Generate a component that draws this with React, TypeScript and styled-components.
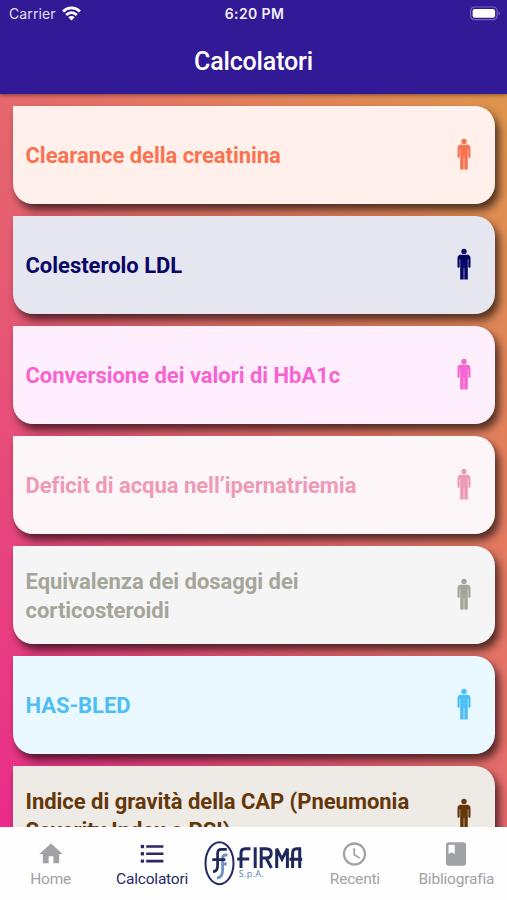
import React from "react";
import styled, { createGlobalStyle } from "styled-components";

const GlobalStyle = createGlobalStyle`
  * { box-sizing: border-box; }
  body { margin: 0; background: #fff; font-family: Roboto, sans-serif; }
`;

const Screen = styled.div`
  display: flex;
  flex-direction: column;
  height: 900px;
  overflow: hidden;
`;

const Header = styled.header`
  flex: none;
  height: 94px;
  background: #321995;
  color: #fff;
  position: relative;
  z-index: 1;
  box-shadow: 0 1px 4px rgba(0, 0, 0, 0.45);
`;

const StatusBar = styled.div`
  display: grid;
  grid-template-columns: 1fr auto 1fr;
  align-items: center;
  height: 27px;
  padding: 0 7px 0 9px;
  font-family: Inter, sans-serif;
  font-size: 14px;
`;

const Carrier = styled.div`
  display: flex;
  align-items: center;
  gap: 6px;
  color: #e4dff5;
  letter-spacing: 0.1px;
`;

const Time = styled.div`
  font-weight: 600;
  font-size: 14px;
  letter-spacing: 0.4px;
  color: #f3f0fb;
`;

const Battery = styled.div`
  display: flex;
  justify-content: flex-end;
`;

const Title = styled.h1`
  margin: 0;
  height: 68px;
  line-height: 69px;
  text-align: center;
  font-size: 25px;
  font-weight: 500;
  letter-spacing: -0.15px;
`;

const List = styled.main`
  flex: 1;
  min-height: 0;
  overflow: hidden;
  display: flex;
  flex-direction: column;
  gap: 12px;
  padding: 12px 12px 0 13px;
  background: linear-gradient(to top right, #ea2c8a, #e5696c 50%, #de954c);
`;

const Card = styled.div<{ $ink: string; $tint: string }>`
  flex: none;
  display: flex;
  align-items: center;
  justify-content: space-between;
  height: 98px;
  padding: 0 24px 0 12.5px;
  border-radius: 0 20px 20px 20px;
  background: ${(p) => p.$tint};
  color: ${(p) => p.$ink};
  box-shadow: 4px 6px 9px rgba(0, 0, 0, 0.65);
`;

const Label = styled.div`
  width: 395px;
  padding-top: 2px;
  font-size: 22px;
  line-height: 29.3px;
  font-weight: 700;
  letter-spacing: -0.03px;
`;

const TabBar = styled.nav`
  flex: none;
  display: grid;
  grid-template-columns: repeat(5, 1fr);
  height: 73px;
  background: #fefefe;
  position: relative;
  z-index: 1;
`;

const Tab = styled.div<{ $active?: boolean }>`
  display: flex;
  flex-direction: column;
  align-items: center;
  padding-top: 13px;
  color: ${(p) => (p.$active ? "#292765" : "#a1a2a6")};
  font-size: 15.5px;
  line-height: 20px;
  letter-spacing: -0.2px;
  white-space: nowrap;

  svg {
    display: block;
    margin-bottom: 1px;
  }
`;

const LogoTab = styled.div`
  display: flex;
  justify-content: center;
  padding-top: 13px;
`;

const Person = () => (
  <svg width="14" height="34" viewBox="0 0 14 34" fill="currentColor">
    <circle cx="7" cy="3.4" r="2.7" />
    <path d="M3.7 6.7h6.6c2 0 3.2 1.3 3.2 3.2v8.5c0 1-.5 1.3-1.1 1.3s-1.1-.4-1.1-1.3v-7.2h-.5v20.2H7.3V20h-.6v11.4H3.2V11.2h-.5v7.2c0 .9-.5 1.3-1.1 1.3s-1.1-.3-1.1-1.3V9.9c0-1.9 1.2-3.2 3.2-3.2z" />
  </svg>
);

const Wifi = () => (
  <svg width="19" height="15" viewBox="0 0 19 15" fill="none" stroke="#fff" strokeWidth="2.8">
    <path d="M1.1 5.5C5.9.7 13.1.7 17.9 5.5" />
    <path d="M4.2 9c3.1-3 7.5-3 10.6 0" />
    <path d="M9.5 14.4 6.3 11.2c1.8-1.6 4.6-1.6 6.4 0z" fill="#fff" stroke="none" />
  </svg>
);

const BatteryIcon = () => (
  <svg width="31" height="15" viewBox="0 0 31 15">
    <rect x="1.6" y="1" width="26.5" height="12.7" rx="4" fill="none" stroke="#7564b9" strokeWidth="1.2" />
    <rect x="3.6" y="3" width="22.5" height="8.7" rx="2.2" fill="#fff" />
    <path d="M29.5 5.3c1.8.6 1.8 3.5 0 4.1z" fill="#7564b9" />
  </svg>
);

const HomeIcon = () => (
  <svg width="28" height="28" viewBox="0 0 24 24" fill="currentColor">
    <path d="M10 20v-6h4v6h5v-8h3L12 3 2 12h3v8z" />
  </svg>
);

const ListIcon = () => (
  <svg width="28" height="28" viewBox="0 0 28 28" fill="currentColor">
    <rect x="2.7" y="4.8" width="3.4" height="3.4" rx="1" />
    <rect x="2.7" y="12.1" width="3.4" height="3.4" rx="1" />
    <rect x="2.7" y="19.4" width="3.4" height="3.4" rx="1" />
    <path d="M8.2 5.2h17.2v2.6H8.2zM8.2 12.5h17.2v2.6H8.2zM8.2 19.8h17.2v2.6H8.2z" />
  </svg>
);

const ClockIcon = () => (
  <svg width="29" height="28" viewBox="0 0 24 24" fill="currentColor">
    <path d="M11.99 2C6.47 2 2 6.48 2 12s4.47 10 9.99 10C17.52 22 22 17.52 22 12S17.52 2 11.99 2zM12 20c-4.42 0-8-3.58-8-8s3.58-8 8-8 8 3.58 8 8-3.58 8-8 8z" />
    <path d="M12.5 7H11v6l5.25 3.15.75-1.23-4.5-2.67z" />
  </svg>
);

const BookIcon = () => (
  <svg width="30" height="28" viewBox="0 0 24 24" fill="currentColor" preserveAspectRatio="none">
    <path d="M18 2H6c-1.1 0-2 .9-2 2v16c0 1.1.9 2 2 2h12c1.1 0 2-.9 2-2V4c0-1.1-.9-2-2-2zM6 4h5v8l-2.5-1.5L6 12V4z" />
  </svg>
);

const SpA = styled.text`
  font-family: "Open Sans", sans-serif;
  font-size: 9px;
  letter-spacing: 0.3px;
  fill: #5b83bd;
`;

const FirmaLogo = () => (
  <svg width="100" height="47" viewBox="0 0 100 47" fill="none" role="img" aria-label="Firma">
    <ellipse cx="16.5" cy="23.2" rx="14" ry="21" stroke="#232b62" strokeWidth="2" />
    <path d="M24.5 15h-1.6c-2.4 0-3.3 1.2-3.3 3.2v12.4c0 4.6-1.5 7-5.6 7.6M19.5 24h4.2" stroke="#6e91ca" strokeWidth="2.8" />
    <path d="M23.8 9.4h-5.3c-2.8 0-3.9 1.4-3.9 3.8v12.5c0 3.9-1.2 5.7-4.6 6M9.3 19.6h13" stroke="#1c2659" strokeWidth="2.7" />
    <g stroke="#20275c" strokeWidth="3">
      <path d="M38 28V13.6c0-3.4 1.1-4.8 4.2-4.8h5.3M34.2 18.9h12" />
      <path d="M52.2 7.3V28" />
      <path d="M58.2 28V8.8h5c3.4 0 5 1.7 5 4.5s-1.6 4.8-5 4.8h-5m5.1.2L68.4 28" />
      <path d="M73.7 28V8.8l5.3 10.4 5.4-10.4V28" />
      <path d="M89.6 28V13.5c0-3.4 1.1-4.7 3.9-4.7h3.2V28M86.5 19.2h12.7" />
    </g>
    <SpA x="35.8" y="37">S.p.A.</SpA>
  </svg>
);

const calculators = [
  { name: "Clearance della creatinina", ink: "#fa7250", tint: "#fff0eb" },
  { name: "Colesterolo LDL", ink: "#080667", tint: "#e5e6ef" },
  { name: "Conversione dei valori di HbA1c", ink: "#f763d1", tint: "#ffeffc" },
  { name: "Deficit di acqua nell’ipernatriemia", ink: "#ed9ab6", tint: "#fdf6f9" },
  { name: "Equivalenza dei dosaggi dei corticosteroidi", ink: "#a5a599", tint: "#f5f5f5" },
  { name: "HAS-BLED", ink: "#4dbff5", tint: "#eaf8ff" },
  { name: "Indice di gravità della CAP (Pneumonia Severity Index o PSI)", ink: "#653608", tint: "#eeeae6" },
];

export default function App() {
  return (
    <Screen>
      <GlobalStyle />
      <Header>
        <StatusBar>
          <Carrier>
            Carrier
            <Wifi />
          </Carrier>
          <Time>6:20 PM</Time>
          <Battery>
            <BatteryIcon />
          </Battery>
        </StatusBar>
        <Title>Calcolatori</Title>
      </Header>
      <List>
        {calculators.map((c) => (
          <Card key={c.name} $ink={c.ink} $tint={c.tint}>
            <Label>{c.name}</Label>
            <Person />
          </Card>
        ))}
      </List>
      <TabBar>
        <Tab>
          <HomeIcon />
          Home
        </Tab>
        <Tab $active>
          <ListIcon />
          Calcolatori
        </Tab>
        <LogoTab>
          <FirmaLogo />
        </LogoTab>
        <Tab>
          <ClockIcon />
          Recenti
        </Tab>
        <Tab>
          <BookIcon />
          Bibliografia
        </Tab>
      </TabBar>
    </Screen>
  );
}
